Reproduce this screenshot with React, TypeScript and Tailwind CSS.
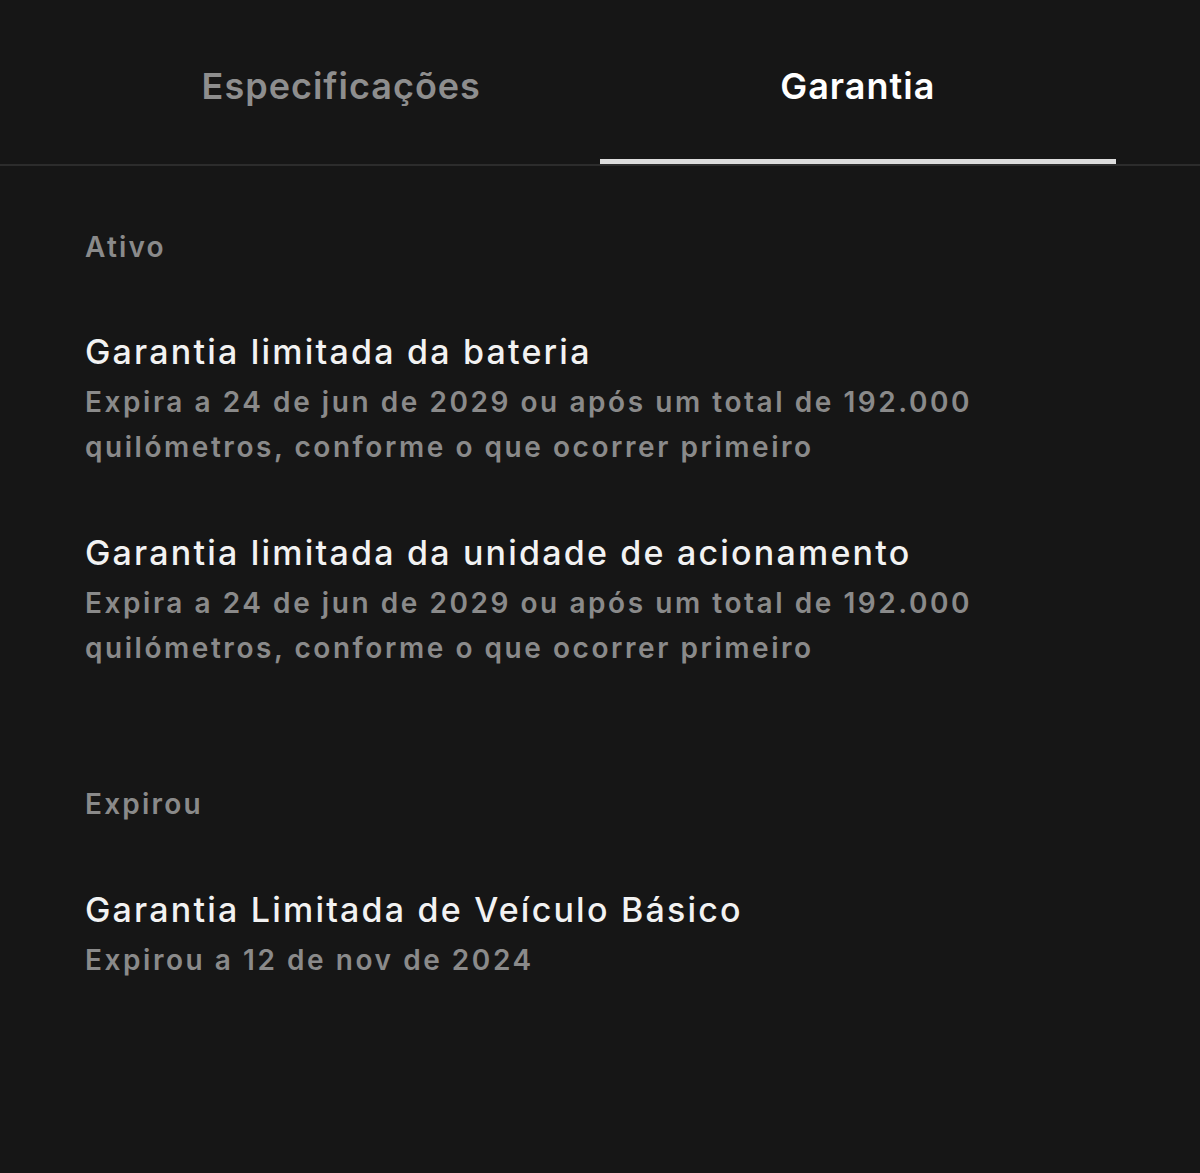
export default function App() {
  const active = [
    {
      title: "Garantia limitada da bateria",
      detail: "Expira a 24 de jun de 2029 ou após um total de 192.000 quilómetros, conforme o que ocorrer primeiro",
    },
    {
      title: "Garantia limitada da unidade de acionamento",
      detail: "Expira a 24 de jun de 2029 ou após um total de 192.000 quilómetros, conforme o que ocorrer primeiro",
    },
  ];

  return (
    <div
      className="min-h-[1173px] w-[1200px] bg-[#161616] text-[#f2f2f2]"
      style={{ fontFamily: "Inter, 'Noto Sans', sans-serif" }}
    >
      {/* tabs */}
      <div className="border-b-2 border-[#2c2c2c]">
        <div className="flex pl-[83px] pr-[84px]">
          <button className="flex h-[164px] flex-1 items-center justify-center pt-[8px] text-[36px] font-semibold tracking-[1px] text-[#8e8e8e]">
            Especificações
          </button>
          <button className="relative flex h-[164px] flex-1 items-center justify-center pt-[8px] text-[36px] font-semibold tracking-[1px] text-white">
            Garantia
            <span className="absolute bottom-0 left-0 right-0 h-[5px] bg-[#dcdcdc]" />
          </button>
        </div>
      </div>

      <div className="px-[85px]">
        <div className="pt-[60px] text-[28px] font-semibold tracking-[2.2px] text-[#8a8a8a]">Ativo</div>
        <div className="mt-[62px] flex flex-col gap-[61px]">
          {active.map((w) => (
            <div key={w.title} className="w-[980px]">
              <div className="text-[34px] font-medium leading-[44px] tracking-[2.2px]">{w.title}</div>
              <div className="mt-[6px] text-[28px] font-semibold leading-[45px] tracking-[2.55px] text-[#8a8a8a]">
                {w.detail}
              </div>
            </div>
          ))}
        </div>

        <div className="mt-[112px] text-[28px] font-semibold tracking-[2.2px] text-[#8a8a8a]">Expirou</div>
        <div className="mt-[63px]">
          <div className="text-[34px] font-medium leading-[44px] tracking-[2.2px]">Garantia Limitada de Veículo Básico</div>
          <div className="mt-[6px] text-[28px] font-semibold leading-[45px] tracking-[2.55px] text-[#8a8a8a]">
            Expirou a 12 de nov de 2024
          </div>
        </div>
      </div>
    </div>
  );
}
